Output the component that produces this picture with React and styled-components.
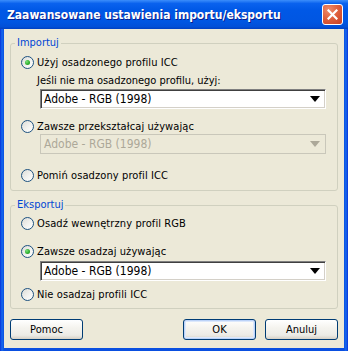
import React from 'react';
import styled, { createGlobalStyle } from 'styled-components';

const GlobalStyle = createGlobalStyle`
  html, body { margin: 0; padding: 0; background: #ECE9D8; }
  body { font-family: Tahoma, "DejaVu Sans Condensed", "Liberation Sans", sans-serif; font-size: 11px; color: #000; }
`;

const Window = styled.div`
  width: 348px;
  height: 351px;
  display: flex;
  flex-direction: column;
  background: #0B4BD8;
`;

const TitleBar = styled.div`
  height: 29px;
  flex: none;
  display: flex;
  align-items: center;
  justify-content: space-between;
  padding: 0 5px 0 7px;
  box-sizing: border-box;
  background: linear-gradient(#3C8EFB 0%, #0A62EE 12%, #0058E6 35%, #0056E2 75%, #0150D8 92%, #0140C0 100%);
`;

const Title = styled.span`
  color: #fff;
  font-family: "DejaVu Sans Condensed", "Liberation Sans", sans-serif;
  font-weight: bold;
  font-size: 12px;
  text-shadow: 1px 1px 0 #0A1E8C;
`;

const CloseButton = styled.div`
  width: 21px;
  height: 21px;
  box-sizing: border-box;
  border: 1px solid #fff;
  border-radius: 3px;
  background: radial-gradient(circle at 30% 25%, #EE8C6C 0%, #E0623E 45%, #C93E22 100%);
  display: flex;
  align-items: center;
  justify-content: center;
`;

const Frame = styled.div`
  flex: 1;
  padding: 0 4px 3px 4px;
  display: flex;
  background: linear-gradient(90deg, #0831D9 0px, #166AEE 2px, #0A4FE0 4px, #0A4FE0 calc(100% - 4px), #166AEE calc(100% - 2px), #0831D9 100%);
`;

const Client = styled.div`
  flex: 1;
  background: #ECE9D8;
  padding: 14px 6px 0 6px;
  display: flex;
  flex-direction: column;
`;

const Group = styled.div`
  position: relative;
  border: 1px solid #D0D0BF;
  border-radius: 3px;
  padding: ${p => p.$pad};
  margin-top: ${p => p.$top || 0}px;
  display: flex;
  flex-direction: column;
`;

const Legend = styled.span`
  position: absolute;
  top: -8px;
  left: 4px;
  padding: 0 2px;
  background: #ECE9D8;
  color: #0046D5;
  line-height: 14px;
`;

const Row = styled.label`
  height: 16px;
  display: flex;
  align-items: center;
  gap: 3px;
  margin-top: ${p => p.$top || 0}px;
  padding-left: 10px;
  letter-spacing: 0.1px;
`;

const Radio = styled.span`
  width: 13px;
  height: 13px;
  box-sizing: border-box;
  border-radius: 50%;
  border: 1px solid #1C5180;
  background: linear-gradient(135deg, #DCDCD7 0%, #F2F2EF 55%, #FFFFFF 100%);
  display: flex;
  align-items: center;
  justify-content: center;
  flex: none;
  &::after {
    content: '';
    display: ${p => (p.$checked ? 'block' : 'none')};
    width: 5px;
    height: 5px;
    border-radius: 50%;
    background: radial-gradient(circle at 35% 35%, #7BE27A 0%, #2FB02F 55%, #1E8A1E 100%);
  }
`;

const Hint = styled.div`
  height: 16px;
  line-height: 16px;
  margin-top: 3px;
  padding-left: 26px;
`;

const Combo = styled.div`
  height: 20px;
  box-sizing: border-box;
  margin: ${p => p.$top || 0}px 11px 0 29px;
  display: flex;
  align-items: center;
  justify-content: space-between;
  padding: 0 5px 0 3px;
  background: ${p => (p.$disabled ? '#ECE9D8' : '#fff')};
  color: ${p => (p.$disabled ? '#ACA899' : '#000')};
  border: 1px solid;
  border-color: ${p => (p.$disabled ? '#C9C7BA' : '#7F7F7F #FFFFFF #FFFFFF #7F7F7F')};
  box-shadow: ${p => (p.$disabled ? 'none' : 'inset 1px 1px 0 #404040, inset -1px -1px 0 #D4D0C8')};
  font-size: 12px;
`;

const Arrow = styled.span`
  width: 0;
  height: 0;
  border-left: 5px solid transparent;
  border-right: 5px solid transparent;
  border-top: 6px solid ${p => (p.$disabled ? '#ACA899' : '#000')};
`;

const Buttons = styled.div`
  display: flex;
  margin-top: 10px;
  gap: 9px;
`;

const Button = styled.div`
  width: 73px;
  height: 21px;
  box-sizing: border-box;
  border: 1px solid #003C74;
  border-radius: 3px;
  background: linear-gradient(#FFFFFF 0%, #F5F4EF 40%, #ECEBE6 80%, #D6D0C5 100%);
  display: flex;
  align-items: center;
  justify-content: center;
  margin-right: ${p => p.$push ? 'auto' : '0'};
  box-shadow: ${p => (p.$default ? 'inset 0 0 0 1px #BCD3F8, inset 0 0 0 2px #DCE8FB' : 'none')};
`;

function Choice({ checked, top, children }) {
  return (
    <Row $top={top}>
      <Radio $checked={checked} />
      <span>{children}</span>
    </Row>
  );
}

function Dropdown({ disabled, top }) {
  return (
    <Combo $disabled={disabled} $top={top}>
      <span>Adobe - RGB (1998)</span>
      <Arrow $disabled={disabled} />
    </Combo>
  );
}

export default function App() {
  return (
    <>
      <GlobalStyle />
      <Window>
        <TitleBar>
          <Title>Zaawansowane ustawienia importu/eksportu</Title>
          <CloseButton>
            <svg width="11" height="11" viewBox="0 0 11 11">
              <path d="M1.5 1.5 L9.5 9.5 M9.5 1.5 L1.5 9.5" stroke="#fff" strokeWidth="2.2" strokeLinecap="square" />
            </svg>
          </CloseButton>
        </TitleBar>
        <Frame>
          <Client>
            <Group $pad="0 0 7px 0">
              <Legend>Importuj</Legend>
              <Choice checked top={10}>Użyj osadzonego profilu ICC</Choice>
              <Hint>Jeśli nie ma osadzonego profilu, użyj:</Hint>
              <Dropdown />
              <Choice top={9}>Zawsze przekształcaj używając</Choice>
              <Dropdown disabled />
              <Choice top={13}>Pomiń osadzony profil ICC</Choice>
            </Group>
            <Group $pad="0 0 6px 0" $top={14}>
              <Legend>Eksportuj</Legend>
              <Choice top={9}>Osadź wewnętrzny profil RGB</Choice>
              <Choice checked top={12}>Zawsze osadzaj używając</Choice>
              <Dropdown top={2} />
              <Choice top={5}>Nie osadzaj profili ICC</Choice>
            </Group>
            <Buttons>
              <Button $push>Pomoc</Button>
              <Button $default>OK</Button>
              <Button>Anuluj</Button>
            </Buttons>
          </Client>
        </Frame>
      </Window>
    </>
  );
}
